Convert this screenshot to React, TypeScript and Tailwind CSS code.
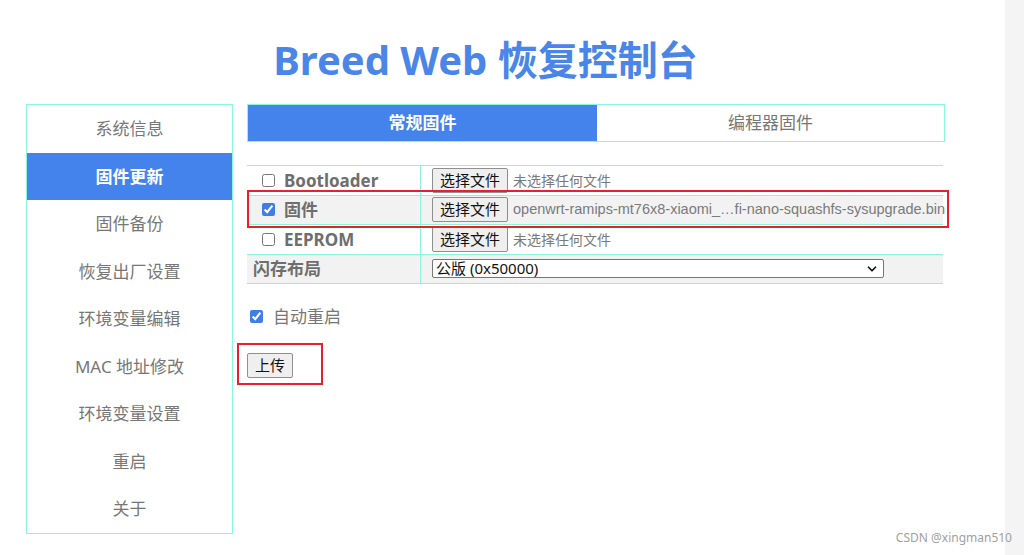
import { ChevronDown } from "lucide-react";

const font = { fontFamily: '"Noto Sans", "Noto Sans CJK SC", sans-serif' };

const menu = [
  "系统信息",
  "固件更新",
  "固件备份",
  "恢复出厂设置",
  "环境变量编辑",
  "MAC 地址修改",
  "环境变量设置",
  "重启",
  "关于",
];

function FileButton() {
  return (
    <button className="h-[25px] shrink-0 rounded-[2px] border border-[#8f8f8f] bg-[#efefef] px-[7px] text-[15px] leading-none text-[#111]">
      选择文件
    </button>
  );
}

function Row({
  label,
  checked,
  file,
  shaded,
}: {
  label: string;
  checked: boolean;
  file?: string;
  shaded?: boolean;
}) {
  return (
    <div className={`flex h-[29.5px] border-b border-[#8cf6d8] ${shaded ? "bg-[#f2f2f2]" : "bg-white"}`}>
      <div className="flex w-[174px] shrink-0 items-center gap-[9px] border-r border-[#8cf6d8] pl-[15px]">
        <input
          type="checkbox"
          defaultChecked={checked}
          className="h-[13px] w-[13px] accent-[#3f7de8]"
        />
        <span className="text-[17px] font-bold text-[#6e6e6e]">{label}</span>
      </div>
      <div className="flex min-w-0 flex-1 items-center gap-[5px] pl-[11px]">
        <FileButton />
        {file ? (
          <span className="whitespace-nowrap font-['Liberation_Sans',sans-serif] text-[14.5px] text-[#7a7a7a]">
            {file}
          </span>
        ) : (
          <span className="whitespace-nowrap text-[14px] text-[#7a7a7a]">未选择任何文件</span>
        )}
      </div>
    </div>
  );
}

export default function App() {
  return (
    <div style={font} className="relative flex h-[555px] w-[1024px] overflow-hidden bg-white">
      <div className="flex-1 pl-[26px]">
        <h1 className="w-[919px] pt-[36px] text-center text-[40px] font-bold leading-[48px] text-[#4a86e8]">
          Breed Web 恢复控制台
        </h1>

        <div className="mt-[20px] flex gap-[14px]">
          <nav className="w-[207px] shrink-0 border border-[#8cf6d8]">
            {menu.map((item, i) => (
              <div
                key={item}
                className={`flex h-[47.5px] items-center justify-center text-[17px] ${
                  i === 1 ? "bg-[#4583ec] font-bold text-white" : "text-[#777]"
                }`}
              >
                {item}
              </div>
            ))}
          </nav>

          <main className="w-[698px]">
            <div className="flex h-[38px] border border-[#8cf6d8]">
              <div className="flex w-[349px] items-center justify-center bg-[#4583ec] text-[17px] font-bold text-white">
                常规固件
              </div>
              <div className="flex flex-1 items-center justify-center text-[17px] text-[#777]">
                编程器固件
              </div>
            </div>

            <div className="relative mt-[23px] w-[696px] border-t border-[#8cf6d8]">
              <Row label="Bootloader" checked={false} />
              <Row
                label="固件"
                checked
                shaded
                file="openwrt-ramips-mt76x8-xiaomi_…fi-nano-squashfs-sysupgrade.bin"
              />
              <Row label="EEPROM" checked={false} />
              <div className="flex h-[29.5px] border-b border-[#8cf6d8] bg-[#f2f2f2]">
                <div className="flex w-[174px] shrink-0 items-center border-r border-[#8cf6d8] pl-[6px]">
                  <span className="text-[17px] font-bold text-[#6e6e6e]">闪存布局</span>
                </div>
                <div className="flex flex-1 items-center pl-[11px]">
                  <div className="flex h-[19px] w-[452px] items-center justify-between rounded-[2px] border border-[#767676] bg-white pl-[3px] pr-[4px] text-[15px] leading-none text-[#111]">
                    <span>公版 (0x50000)</span>
                    <ChevronDown size={14} strokeWidth={3} />
                  </div>
                </div>
              </div>
              <div className="pointer-events-none absolute left-0 top-[24px] h-[38px] w-[702px] border-2 border-[#e8202a]" />
            </div>

            <label className="mt-[20px] flex items-center gap-[10px] pl-[3px]">
              <input type="checkbox" defaultChecked className="h-[13px] w-[13px] accent-[#3f7de8]" />
              <span className="text-[17px] text-[#777]">自动重启</span>
            </label>

            <div className="relative mt-[23px] inline-block">
              <button className="h-[25px] rounded-[2px] border border-[#8f8f8f] bg-[#efefef] px-[7px] text-[15px] leading-none text-[#111]">
                上传
              </button>
              <div className="pointer-events-none absolute left-[-10px] top-[-10px] h-[42px] w-[86px] border-2 border-[#e8202a]" />
            </div>
          </main>
        </div>
      </div>

      <div className="w-[19px] shrink-0 bg-[#f4f4f4]" />

      <span className="absolute bottom-[8px] right-[12px] text-[12px] text-[#a0a0a0]">CSDN @xingman510</span>
    </div>
  );
}
